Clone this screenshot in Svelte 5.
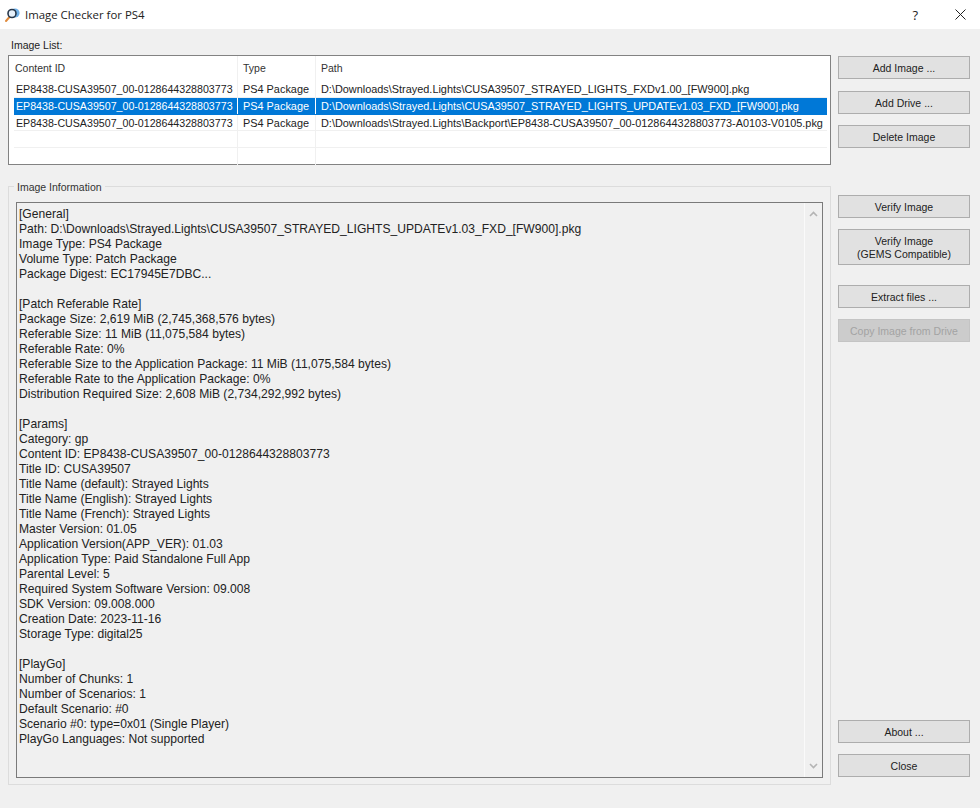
<script lang="ts">
  const columns = ['Content ID', 'Type', 'Path']
  const contentId = 'EP8438-CUSA39507_00-0128644328803773'

  const images = [
    { id: contentId, type: 'PS4 Package', path: 'D:\\Downloads\\Strayed.Lights\\CUSA39507_STRAYED_LIGHTS_FXDv1.00_[FW900].pkg' },
    { id: contentId, type: 'PS4 Package', path: 'D:\\Downloads\\Strayed.Lights\\CUSA39507_STRAYED_LIGHTS_UPDATEv1.03_FXD_[FW900].pkg', selected: true },
    { id: contentId, type: 'PS4 Package', path: 'D:\\Downloads\\Strayed.Lights\\Backport\\EP8438-CUSA39507_00-0128644328803773-A0103-V0105.pkg' },
    { id: '', type: '', path: '' },
    { id: '', type: '', path: '' },
  ]

  const info = `[General]
Path: D:\\Downloads\\Strayed.Lights\\CUSA39507_STRAYED_LIGHTS_UPDATEv1.03_FXD_[FW900].pkg
Image Type: PS4 Package
Volume Type: Patch Package
Package Digest: EC17945E7DBC...

[Patch Referable Rate]
Package Size: 2,619 MiB (2,745,368,576 bytes)
Referable Size: 11 MiB (11,075,584 bytes)
Referable Rate: 0%
Referable Size to the Application Package: 11 MiB (11,075,584 bytes)
Referable Rate to the Application Package: 0%
Distribution Required Size: 2,608 MiB (2,734,292,992 bytes)

[Params]
Category: gp
Content ID: EP8438-CUSA39507_00-0128644328803773
Title ID: CUSA39507
Title Name (default): Strayed Lights
Title Name (English): Strayed Lights
Title Name (French): Strayed Lights
Master Version: 01.05
Application Version(APP_VER): 01.03
Application Type: Paid Standalone Full App
Parental Level: 5
Required System Software Version: 09.008
SDK Version: 09.008.000
Creation Date: 2023-11-16
Storage Type: digital25

[PlayGo]
Number of Chunks: 1
Number of Scenarios: 1
Default Scenario: #0
Scenario #0: type=0x01 (Single Player)
PlayGo Languages: Not supported`
</script>

<div class="window">
  <header class="titlebar">
    <svg class="app-icon" viewBox="0 0 16 16" aria-hidden="true">
      <line x1="5.5" y1="10" x2="2" y2="14" stroke="#e08a3c" stroke-width="2" stroke-linecap="round" />
      <circle cx="11" cy="6" r="4.6" fill="#6fb0e8" />
      <circle cx="8" cy="6.5" r="4" fill="#e6f0fa" stroke="#26364a" stroke-width="1.6" />
    </svg>
    <span class="title">Image Checker for PS4</span>
    <span class="help">?</span>
    <svg class="close-x" viewBox="0 0 11 11" aria-hidden="true">
      <path d="M0.5 0.5 L10.5 10.5 M10.5 0.5 L0.5 10.5" stroke="#222" fill="none" />
    </svg>
  </header>

  <div class="content">
    <div class="left">
      <div class="list-label">Image List:</div>
      <div class="list">
        <div class="row head">
          {#each columns as col}
            <span class="cell">{col}</span>
          {/each}
        </div>
        {#each images as image}
          <div class="row item" class:selected={image.selected}>
            <span class="cell">{image.id}</span>
            <span class="cell">{image.type}</span>
            <span class="cell">{image.path}</span>
          </div>
        {/each}
      </div>

      <div class="group">
        <span class="legend">Image Information</span>
        <div class="textbox">
          <pre class="info">{info}</pre>
          <div class="scrollbar">
            <svg viewBox="0 0 9 6" aria-hidden="true"><path d="M1 5 L4.5 1.5 L8 5" /></svg>
            <svg viewBox="0 0 9 6" aria-hidden="true"><path d="M1 1 L4.5 4.5 L8 1" /></svg>
          </div>
        </div>
      </div>
    </div>

    <div class="actions">
      <div class="btn-group first">
        <button>Add Image ...</button>
        <button class="far">Add Drive ...</button>
        <button>Delete Image</button>
      </div>
      <div class="btn-group verify">
        <button>Verify Image</button>
        <button class="tall">Verify Image<br />(GEMS Compatible)</button>
      </div>
      <div class="btn-group extract">
        <button>Extract files ...</button>
        <button disabled>Copy Image from Drive</button>
      </div>
      <div class="btn-group bottom">
        <button>About ...</button>
        <button>Close</button>
      </div>
    </div>
  </div>
</div>

<style>
  :global(body) {
    margin: 0;
    background: #f0f0f0;
  }

  .window {
    width: 980px;
    height: 808px;
    display: flex;
    flex-direction: column;
    overflow: hidden;
    background: #f0f0f0;
    color: #222;
    font-family: "Liberation Sans", Arial, sans-serif;
    font-size: 10.5px;
  }

  .titlebar {
    height: 29px;
    flex-shrink: 0;
    display: flex;
    align-items: center;
    background: #fff;
    padding-left: 4px;
  }

  .app-icon {
    width: 16px;
    height: 16px;
  }

  .title {
    margin-left: 5px;
    font-family: "Open Sans", sans-serif;
    font-size: 11.4px;
    flex: 1;
  }

  .help {
    font-family: "Open Sans", sans-serif;
    font-size: 13px;
    margin-right: 37px;
  }

  .close-x {
    width: 11px;
    height: 11px;
    margin-right: 14px;
  }

  .content {
    display: flex;
    flex: 1;
    padding-left: 8px;
    min-height: 0;
  }

  .left {
    width: 823px;
    flex-shrink: 0;
    display: flex;
    flex-direction: column;
  }

  .list-label {
    height: 26px;
    line-height: 32px;
    padding-left: 3px;
  }

  .list {
    height: 108px;
    border: 1px solid #828282;
    background: #fff;
    padding: 0 3px 0 5px;
  }

  .row {
    display: grid;
    grid-template-columns: 224px 78px 1fr;
  }

  .cell {
    white-space: nowrap;
    overflow: hidden;
    padding-left: 5px;
    border-right: 1px solid #f0f0f0;
  }

  .cell:first-child {
    padding-left: 2px;
  }

  .cell:last-child {
    border-right: none;
  }

  .head {
    height: 25px;
    line-height: 24px;
    color: #333;
  }

  .head .cell:first-child {
    padding-left: 1px;
  }

  .item {
    height: 16.8px;
    line-height: 16px;
    font-size: 10.9px;
    border-bottom: 1px solid #f0f0f0;
    box-sizing: border-box;
  }

  .item .cell:first-child {
    font-size: 10.65px;
  }

  .item:last-child {
    border-bottom: none;
  }

  .item.selected {
    background: #0078d7;
    color: #fff;
    border-bottom-color: #0078d7;
  }

  .item.selected .cell {
    border-right-color: #fff;
  }

  .group {
    position: relative;
    margin-top: 21px;
    padding: 15px 7px 6px;
    height: 599px;
    box-sizing: border-box;
    border: 1px solid #dcdcdc;
  }

  .legend {
    position: absolute;
    top: -7px;
    left: 5px;
    padding: 0 3px;
    background: #f0f0f0;
    color: #333;
    line-height: 14px;
  }

  .textbox {
    height: 100%;
    box-sizing: border-box;
    border: 1px solid #7a7a7a;
    display: flex;
  }

  .info {
    flex: 1;
    margin: 0;
    padding: 4px 0 0 2px;
    font: inherit;
    font-size: 12.1px;
    line-height: 15px;
    white-space: pre;
    overflow: hidden;
  }

  .scrollbar {
    width: 18px;
    border-left: 1px solid #fafafa;
    display: flex;
    flex-direction: column;
    justify-content: space-between;
    align-items: center;
    padding: 8px 0;
    box-sizing: border-box;
  }

  .scrollbar svg {
    width: 9px;
    height: 6px;
    fill: none;
    stroke: #b4b4b4;
    stroke-width: 1.6;
  }

  .actions {
    width: 132px;
    margin-left: 7px;
    display: flex;
    flex-direction: column;
  }

  .btn-group {
    display: flex;
    flex-direction: column;
    gap: 11px;
  }

  .first {
    margin-top: 27px;
  }

  .first .far {
    margin-top: 1px;
  }

  .verify {
    margin-top: 47px;
  }

  .extract {
    margin-top: 20px;
  }

  .bottom {
    margin-top: auto;
    margin-bottom: 31px;
  }

  button {
    height: 23px;
    padding: 1px 0 0;
    border: 1px solid #adadad;
    background: #e1e1e1;
    color: #222;
    font: inherit;
    line-height: 13px;
  }

  button.tall {
    height: 36px;
  }

  button:disabled {
    background: #cccccc;
    border-color: #c4c4c4;
    color: #a3a3a3;
  }
</style>
